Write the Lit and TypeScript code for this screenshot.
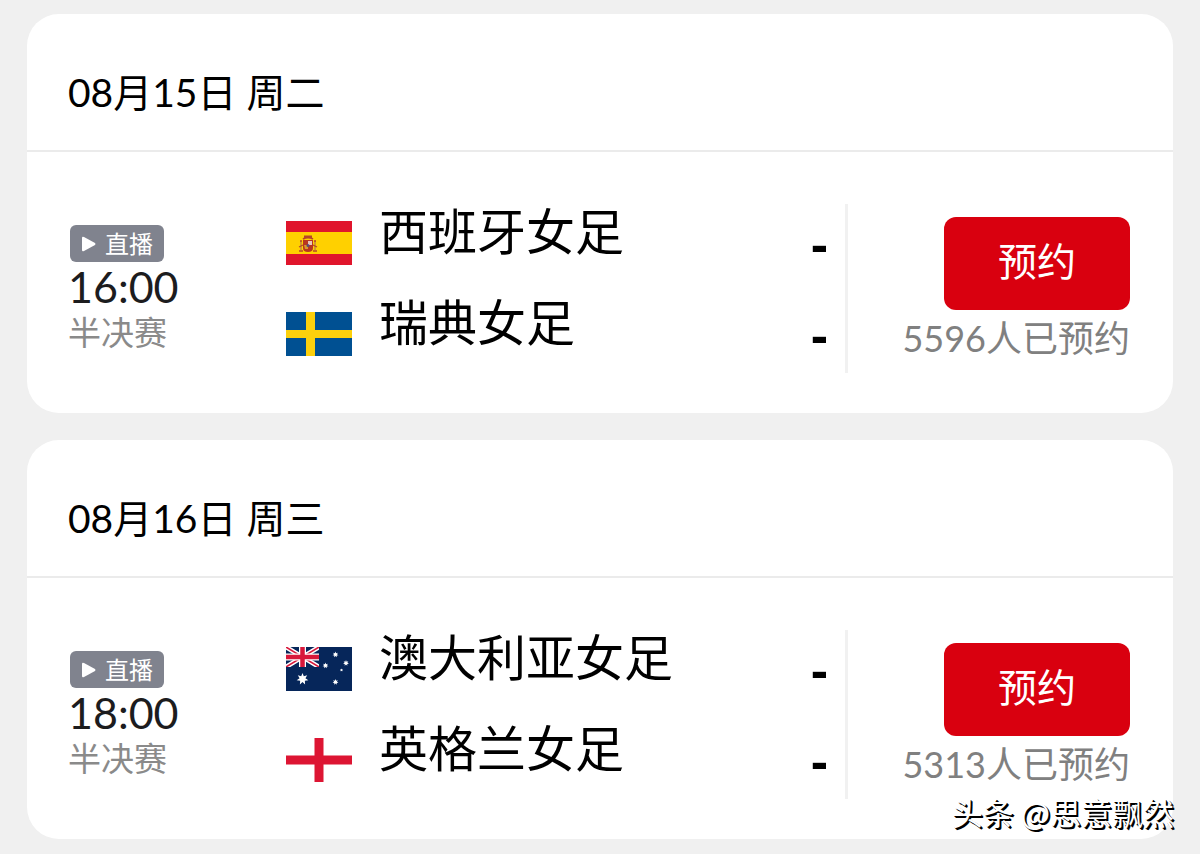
import { LitElement, html, svg, css } from "lit";
import { customElement, property, state } from "lit/decorators.js";

type Flag = "spain" | "sweden" | "australia" | "england";

interface Team {
  name: string;
  flag: Flag;
  score: string;
}

interface Match {
  date: string;
  time: string;
  stage: string;
  teams: Team[];
  booked: number;
}

const star = (cx: number, cy: number, r: number) => {
  const points: string[] = [];
  for (let i = 0; i < 14; i++) {
    const a = (Math.PI * i) / 7 - Math.PI / 2;
    const d = i % 2 ? r * 0.5 : r;
    points.push(`${cx + d * Math.cos(a)},${cy + d * Math.sin(a)}`);
  }
  return svg`<polygon fill="#fff" points=${points.join(" ")}></polygon>`;
};

const flags = {
  spain: () => svg`
    <rect width="66" height="44" fill="#e0152c"></rect>
    <rect y="11" width="66" height="22" fill="#ffd000"></rect>
    <g fill="none" stroke="#b5452a">
      <path d="M15 20v9M29 20v9" stroke-width="1.6" stroke="#c98a3a"></path>
      <path d="M13 30h4M27 30h4M14 20h2M28 20h2" stroke-width="1.4"></path>
      <path d="M13 26l4-2M27 24l4 2" stroke-width="1.2"></path>
      <path d="M17 18q5-3 10 0M18 15.500h8" stroke-width="1.800"></path>
    </g>
    <path d="M17 19h10v8q0 4-5 4t-5-4z" fill="#b8361f"></path>
    <path d="M22 20h4v4h-4z" fill="#e8c4b8"></path>
    <path d="M18 24h4v4h-3z" fill="#d99a2b"></path>
    <circle cx="22" cy="24.500" r="1.500" fill="#5a4a7a"></circle>`,
  sweden: () => svg`
    <rect width="66" height="44" fill="#005092"></rect>
    <path d="M20 0h9v18h37v8H29v18h-9V26H0v-8h20z" fill="#fcd00c"></path>`,
  australia: () => svg`
    <rect width="66" height="44" fill="#06265a"></rect>
    <svg width="33" height="20" viewBox="0 0 33 20">
      <path d="M0 0L33 20M33 0L0 20" stroke="#fff" stroke-width="4.500"></path>
      <path d="M0 0L33 20M33 0L0 20" stroke="#d8173a" stroke-width="1.500"></path>
      <path d="M16.500 0v20M0 10h33" stroke="#fff" stroke-width="7"></path>
      <path d="M16.500 0v20M0 10h33" stroke="#d8173a" stroke-width="4.500"></path>
    </svg>
    ${star(16.5, 32, 6)} ${star(49.5, 7.5, 3)} ${star(39.5, 18.5, 3)}
    ${star(60, 16, 3)} ${star(49.5, 35, 3)} ${star(55.5, 23, 1.6)}`,
  england: () => svg`
    <rect width="66" height="44" fill="#fff"></rect>
    <path d="M28.500 0h9v17.500h28.500v9H37.500v17.500h-9V26.500H0v-9h28.500z" fill="#dd1533"></path>`,
};

@customElement("team-row")
class TeamRow extends LitElement {
  @property({ attribute: false }) team!: Team;

  static styles = css`
    :host {
      display: grid;
      grid-template-columns: 66px 1fr auto;
      align-items: center;
      column-gap: 27px;
    }
    .flag {
      display: block;
      width: 66px;
      height: 44px;
    }
    .name {
      padding-bottom: 24px;
      font-size: 49px;
      line-height: 48px;
      white-space: nowrap;
    }
    .score {
      padding-top: 2px;
      font-family: "Liberation Sans", sans-serif;
      font-size: 52px;
      font-weight: 700;
      line-height: 56px;
    }
  `;

  render() {
    return html`
      <svg class="flag" viewBox="0 0 66 44" aria-hidden="true">
        ${flags[this.team.flag]()}
      </svg>
      <span class="name">${this.team.name}</span>
      <span class="score">${this.team.score}</span>
    `;
  }
}

@customElement("match-card")
class MatchCard extends LitElement {
  @property({ attribute: false }) match!: Match;

  static styles = css`
    :host {
      display: block;
      border-radius: 32px;
      background: #fff;
    }
    .date {
      margin: 0;
      padding: 50px 41px 30px;
      border-bottom: 2px solid #ebebeb;
      font-size: 39px;
      font-weight: 400;
      line-height: 56px;
    }
    .body {
      display: grid;
      grid-template-columns: 218px 1fr 285px;
      padding: 52px 43px 40px 41px;
    }
    .info {
      display: flex;
      flex-direction: column;
      align-items: flex-start;
      padding-top: 21px;
    }
    .live {
      display: flex;
      align-items: center;
      gap: 8px;
      box-sizing: border-box;
      height: 37px;
      margin-left: 2px;
      padding: 0 11px;
      border-radius: 6px;
      background: #80838e;
      color: #fff;
      font-size: 24px;
      line-height: 37px;
    }
    .play {
      width: 16px;
      height: 16px;
    }
    .time {
      color: #1c1c1e;
      font-size: 43px;
      line-height: 50px;
    }
    .stage {
      color: #8a8a8a;
      font-size: 33px;
      line-height: 40px;
    }
    .teams {
      display: flex;
      flex-direction: column;
      gap: 19px;
      padding: 3px 17px 3px 0;
    }
    .booking {
      display: flex;
      flex-direction: column;
      align-items: flex-end;
      padding-top: 13px;
      border-left: 3px solid #f1f1f1;
    }
    .book {
      box-sizing: border-box;
      width: 186px;
      height: 93px;
      padding: 0 0 6px;
      border: 0;
      border-radius: 12px;
      background: #d9000f;
      color: #fff;
      font: inherit;
      font-size: 39px;
      line-height: 56px;
      cursor: pointer;
    }
    .count {
      color: #808080;
      font-size: 36px;
      line-height: 56px;
      white-space: nowrap;
    }
  `;

  render() {
    const m = this.match;
    return html`
      <h2 class="date">${m.date}</h2>
      <div class="body">
        <div class="info">
          <span class="live">
            <svg class="play" viewBox="0 0 16 16" aria-hidden="true">
              <path d="M1 2v12q0 2 2 1l11-6q1-1 0-2L3 1Q1 0 1 2z" fill="#fff"></path>
            </svg>
            直播
          </span>
          <time class="time">${m.time}</time>
          <span class="stage">${m.stage}</span>
        </div>
        <div class="teams">
          ${m.teams.map((t) => html`<team-row .team=${t}></team-row>`)}
        </div>
        <div class="booking">
          <button class="book" type="button">预约</button>
          <span class="count">${m.booked}人已预约</span>
        </div>
      </div>
    `;
  }
}

@customElement("app-root")
class AppRoot extends LitElement {
  @state() private matches: Match[] = [
    {
      date: "08月15日 周二",
      time: "16:00",
      stage: "半决赛",
      teams: [
        { name: "西班牙女足", flag: "spain", score: "-" },
        { name: "瑞典女足", flag: "sweden", score: "-" },
      ],
      booked: 5596,
    },
    {
      date: "08月16日 周三",
      time: "18:00",
      stage: "半决赛",
      teams: [
        { name: "澳大利亚女足", flag: "australia", score: "-" },
        { name: "英格兰女足", flag: "england", score: "-" },
      ],
      booked: 5313,
    },
  ];

  static styles = css`
    :host {
      display: block;
      position: relative;
      box-sizing: border-box;
      min-height: 100vh;
      padding: 14px 27px 15px;
      background: #f0f0f0;
      color: #000;
      font-family: Lato, "Noto Sans CJK SC", sans-serif;
    }
    .list {
      display: flex;
      flex-direction: column;
      gap: 27px;
    }
    .mark {
      position: absolute;
      right: 26px;
      bottom: 22px;
      color: #fff;
      font-family: "Noto Sans CJK SC", sans-serif;
      font-size: 31px;
      line-height: 40px;
      text-shadow: 1px 1px 0 #000, 2px 2px 0 #000;
    }
  `;

  render() {
    return html`
      <main class="list">
        ${this.matches.map((m) => html`<match-card .match=${m}></match-card>`)}
      </main>
      <span class="mark">头条 @思意飘然</span>
    `;
  }
}
